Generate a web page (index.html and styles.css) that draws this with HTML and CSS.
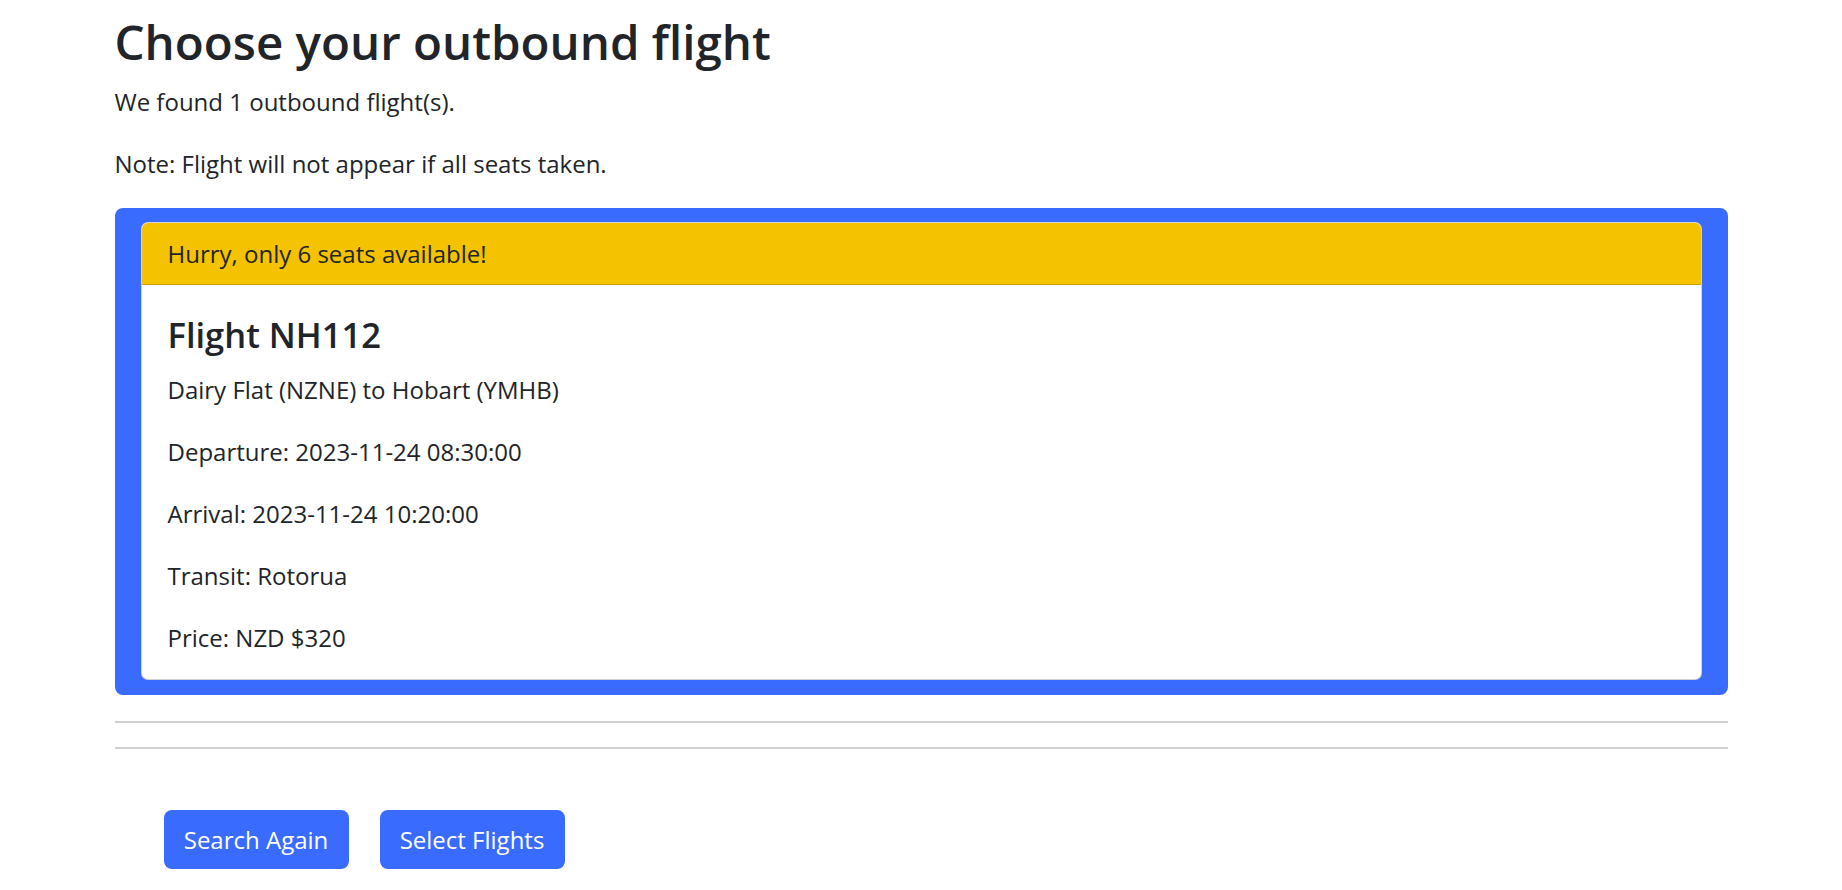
FILE: index.html
```html
<!DOCTYPE html>
<html lang="en">
<head>
<meta charset="utf-8">
<title>Choose your outbound flight</title>
<link rel="stylesheet" href="styles.css">
</head>
<body>
<main class="container">
  <h1 class="title">Choose your outbound flight</h1>
  <p class="lead-text">We found 1 outbound flight(s).</p>
  <p class="lead-text">Note: Flight will not appear if all seats taken.</p>

  <div class="flight-list">
    <div class="card">
      <div class="card-header">Hurry, only 6 seats available!</div>
      <div class="card-body">
        <h4 class="card-title">Flight NH112</h4>
        <p class="card-line">Dairy Flat (NZNE) to Hobart (YMHB)</p>
        <p class="card-line">Departure: 2023-11-24 08:30:00</p>
        <p class="card-line">Arrival: 2023-11-24 10:20:00</p>
        <p class="card-line">Transit: Rotorua</p>
        <p class="card-line last">Price: NZD $320</p>
      </div>
    </div>
  </div>

  <hr class="rule first">
  <hr class="rule">

  <div class="actions">
    <button class="btn" type="button">Search Again</button>
    <button class="btn" type="button">Select Flights</button>
  </div>
</main>
</body>
</html>
```

FILE: styles.css
```css
html, body {
  margin: 0;
  padding: 0;
  background: #ffffff;
}

body {
  font-family: "Open Sans", "Noto Sans", sans-serif;
  color: #212529;
  font-size: 24px;
  line-height: 1.5;
}

.container {
  width: 1613px;
  margin: 0 auto;
}

.title {
  font-size: 47.5px;
  font-weight: 600;
  line-height: 60px;
  margin: 12px 0 12px;
}

.lead-text {
  margin: 0 0 26px;
  line-height: 36px;
}

.flight-list {
  background: #3a6bff;
  border-radius: 8px;
  padding: 14px 26px 15px;
}

.card {
  background: #ffffff;
  border: 1px solid rgba(0, 0, 0, 0.18);
  border-radius: 7px;
  overflow: hidden;
}

.card-header {
  background: #f5c200;
  border-bottom: 1px solid #c9a000;
  height: 61px;
  line-height: 61px;
  padding: 0 26px;
}

.card-body {
  padding: 28px 26px 23px;
}

.card-title {
  font-size: 34.5px;
  font-weight: 600;
  line-height: 44px;
  margin: 0 0 15px;
}

.card-line {
  margin: 0 0 26px;
  line-height: 36px;
}

.card-line.last {
  margin-bottom: 0;
}

.rule {
  border: 0;
  border-top: 2px solid #d0d0d0;
  margin: 24px 0 0;
  height: 0;
}

.rule.first {
  margin-top: 26px;
}

.actions {
  display: flex;
  gap: 31px;
  padding: 61px 0 0 49px;
}

.btn {
  font-family: inherit;
  font-size: 24px;
  color: #ffffff;
  background: #3a6bff;
  border: 0;
  border-radius: 8px;
  width: 185px;
  height: 59px;
  padding: 0;
  cursor: pointer;
}
```
